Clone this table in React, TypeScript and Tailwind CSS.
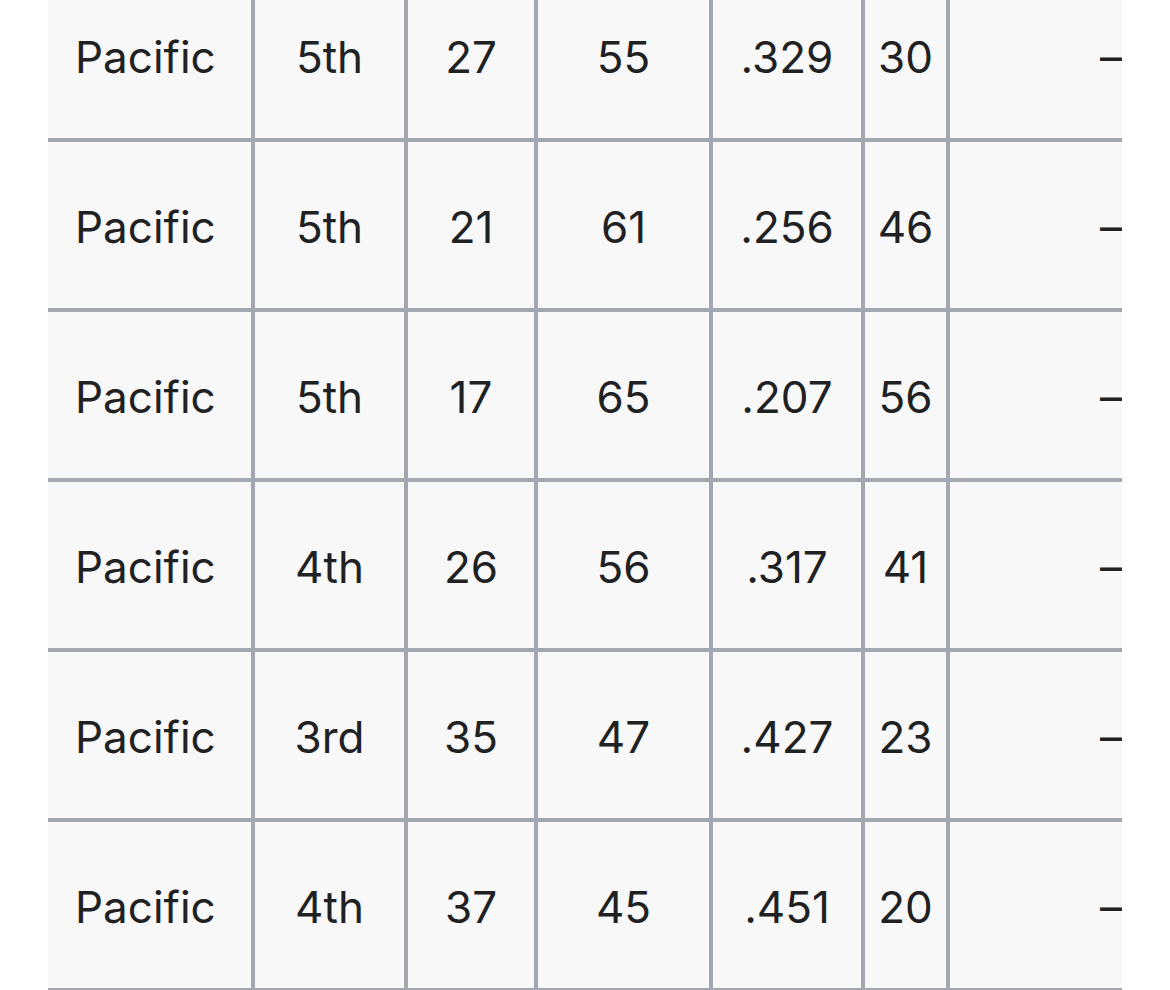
const ROWS = [
  ['Pacific', '5th', '27', '55', '.329', '30', '–'],
  ['Pacific', '5th', '21', '61', '.256', '46', '–'],
  ['Pacific', '5th', '17', '65', '.207', '56', '–'],
  ['Pacific', '4th', '26', '56', '.317', '41', '–'],
  ['Pacific', '3rd', '35', '47', '.427', '23', '–'],
  ['Pacific', '4th', '37', '45', '.451', '20', '–'],
]

// widths include the 4px right border
const COL_W = ['w-[207px]', 'w-[153px]', 'w-[130px]', 'w-[175px]', 'w-[152px]', 'w-[85px]', 'w-[326px]']

export default function App() {
  return (
    <div className="w-[1170px] h-[990px] overflow-hidden bg-white px-[48px]">
      <div className="w-[1074px] overflow-hidden -mt-[28px]">
        <table
          className="border-separate border-spacing-0 table-fixed w-[1228px] bg-[#f8f8f9] text-[#202122] text-[44px] leading-none"
          style={{ fontFamily: 'Inter, "Noto Sans", sans-serif' }}
        >
          <tbody>
            {ROWS.map((row, i) => (
              <tr key={i} className="h-[170px]">
                {row.map((cell, j) => (
                  <td
                    key={j}
                    className={`${COL_W[j]} border-r-[4px] border-b-[4px] border-[#a3a7b0] align-middle pt-[4px] pb-0 px-0 ${
                      j === 0 ? 'text-left pl-[27px]' : 'text-center'
                    }`}
                  >
                    {cell}
                  </td>
                ))}
              </tr>
            ))}
          </tbody>
        </table>
      </div>
    </div>
  )
}
